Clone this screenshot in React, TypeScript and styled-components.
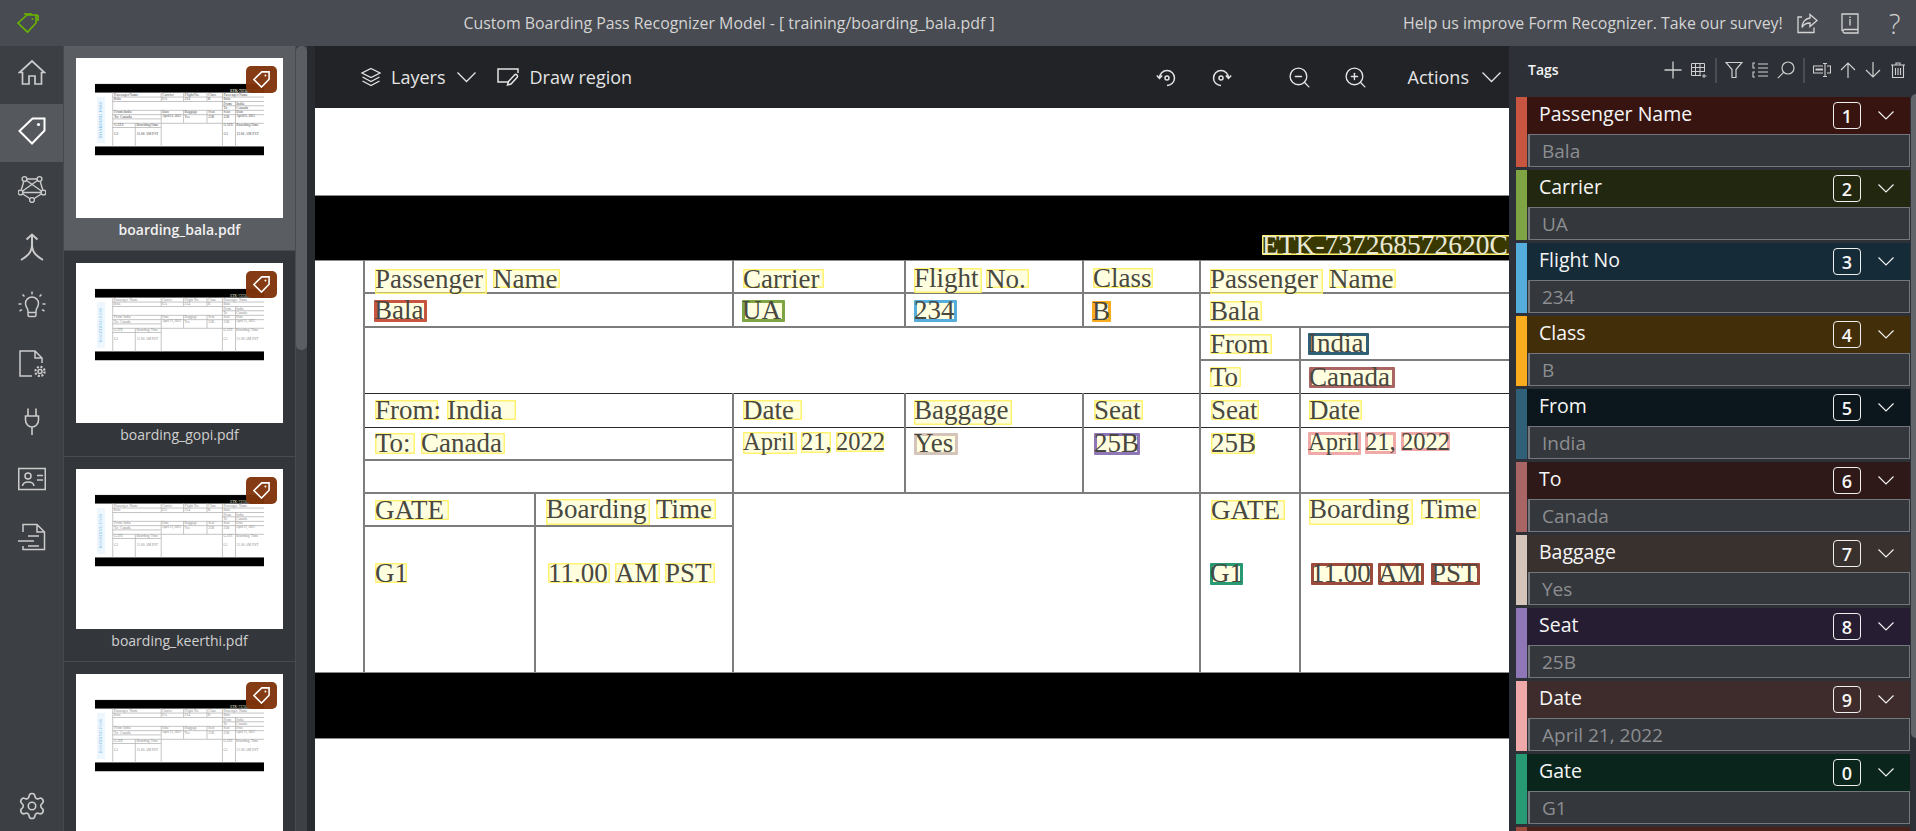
import { ReactNode } from "react"
import { Settings, ZoomIn, ZoomOut } from "lucide-react"
import { createGlobalStyle, styled } from "styled-components"

const UI_FONT = `"Open Sans", "Noto Sans", "Liberation Sans", sans-serif`

const GlobalStyle = createGlobalStyle`
  html, body, #root {
    margin: 0;
    height: 100%;
    overflow: hidden;
  }
  body {
    font-family: ${UI_FONT};
    background: #2d3036;
  }
  * {
    box-sizing: border-box;
  }
`

// ---- document data, all in window coordinates of the main view

const PAGE_X = 85
const PAGE_Y = -3
const THUMB_SCALE = 0.131

type WordItem = {
  t: string
  x: number
  y: number
  w: number
  h: number
  c?: string
  s?: number
}

const YELLOW = "#fff270"

const words: WordItem[] = [
  { t: "ETK-737268572620C", x: 1262, y: 235, w: 258, h: 20, s: 27.5 },
  { t: "Passenger", x: 375, y: 269, w: 112, h: 25 },
  { t: "Name", x: 493, y: 269, w: 67, h: 19 },
  { t: "Carrier", x: 743, y: 269, w: 81, h: 19 },
  { t: "Flight", x: 914, y: 268, w: 68, h: 25 },
  { t: "No.", x: 986, y: 269, w: 43, h: 19 },
  { t: "Class", x: 1093, y: 268, w: 60, h: 20 },
  { t: "Passenger", x: 1210, y: 269, w: 113, h: 25 },
  { t: "Name", x: 1329, y: 269, w: 67, h: 19 },
  { t: "Bala", x: 374, y: 300, w: 53, h: 22, c: "#c8553f" },
  { t: "UA", x: 742, y: 300, w: 43, h: 22, c: "#7fa444" },
  { t: "234", x: 914, y: 300, w: 43, h: 22, c: "#55addb" },
  { t: "B", x: 1092, y: 301, w: 19, h: 21, c: "#f9ad1e" },
  { t: "Bala", x: 1210, y: 301, w: 52, h: 20 },
  { t: "From", x: 1210, y: 334, w: 62, h: 20 },
  { t: "India", x: 1308, y: 333, w: 61, h: 22, c: "#2f6078" },
  { t: "To", x: 1210, y: 367, w: 31, h: 20 },
  { t: "Canada", x: 1309, y: 367, w: 86, h: 21, c: "#a96464" },
  { t: "From:", x: 375, y: 400, w: 63, h: 20 },
  { t: "India", x: 447, y: 400, w: 69, h: 20 },
  { t: "Date", x: 743, y: 400, w: 59, h: 20 },
  { t: "Baggage", x: 914, y: 400, w: 98, h: 25 },
  { t: "Seat", x: 1094, y: 400, w: 49, h: 20 },
  { t: "Seat", x: 1211, y: 400, w: 48, h: 20 },
  { t: "Date", x: 1309, y: 400, w: 53, h: 20 },
  { t: "To:", x: 375, y: 433, w: 40, h: 21 },
  { t: "Canada", x: 421, y: 433, w: 84, h: 21 },
  { t: "April", x: 743, y: 432, w: 54, h: 22, s: 24.5 },
  { t: "21,", x: 801, y: 432, w: 30, h: 21, s: 24.5 },
  { t: "2022", x: 836, y: 432, w: 48, h: 20, s: 24.5 },
  { t: "Yes", x: 914, y: 433, w: 44, h: 22, c: "#d5c4b9" },
  { t: "25B", x: 1094, y: 433, w: 46, h: 22, c: "#8f76b6" },
  { t: "25B", x: 1211, y: 433, w: 44, h: 21 },
  { t: "April", x: 1308, y: 432, w: 53, h: 23, c: "#efa9a9", s: 24.5 },
  { t: "21,", x: 1365, y: 432, w: 31, h: 22, c: "#efa9a9", s: 24.5 },
  { t: "2022", x: 1401, y: 432, w: 49, h: 19, c: "#efa9a9", s: 24.5 },
  { t: "GATE", x: 375, y: 500, w: 74, h: 20 },
  { t: "Boarding", x: 546, y: 499, w: 104, h: 26 },
  { t: "Time", x: 656, y: 499, w: 60, h: 20 },
  { t: "GATE", x: 1211, y: 500, w: 74, h: 20 },
  { t: "Boarding", x: 1309, y: 499, w: 104, h: 26 },
  { t: "Time", x: 1421, y: 499, w: 59, h: 20 },
  { t: "G1", x: 375, y: 563, w: 32, h: 20 },
  { t: "11.00", x: 548, y: 563, w: 62, h: 20 },
  { t: "AM", x: 615, y: 563, w: 45, h: 20 },
  { t: "PST", x: 665, y: 563, w: 50, h: 20 },
  { t: "G1", x: 1210, y: 563, w: 33, h: 22, c: "#279a73" },
  { t: "11.00", x: 1311, y: 563, w: 62, h: 22, c: "#9c4a3b" },
  { t: "AM", x: 1378, y: 563, w: 46, h: 22, c: "#9c4a3b" },
  { t: "PST", x: 1431, y: 563, w: 49, h: 22, c: "#9c4a3b" },
]

const hLines: [number, number, number, boolean?][] = [
  [292, 363, 1520],
  [326, 363, 1520],
  [359, 1199, 1520],
  [393, 363, 1520, true],
  [427, 363, 1520, true],
  [459, 363, 732],
  [492, 363, 1520],
  [525, 363, 732],
]

const vLines: [number, number, number][] = [
  [363, 260, 672],
  [534, 493, 672],
  [732, 260, 327],
  [732, 393, 672],
  [904, 260, 327],
  [904, 393, 493],
  [1082, 260, 327],
  [1082, 393, 493],
  [1199, 260, 672],
  [1299, 327, 672],
]

// the last row only peeks in at the bottom edge, its text is out of view
const tags = [
  { n: "Passenger Name", v: "Bala", k: "1", c: "#c8553f", bg: "#37140f" },
  { n: "Carrier", v: "UA", k: "2", c: "#7fa444", bg: "#22280f" },
  { n: "Flight No", v: "234", k: "3", c: "#55addb", bg: "#162b38" },
  { n: "Class", v: "B", k: "4", c: "#f9ad1e", bg: "#432e0a" },
  { n: "From", v: "India", k: "5", c: "#2f6078", bg: "#0b171c" },
  { n: "To", v: "Canada", k: "6", c: "#a96464", bg: "#2e1918" },
  { n: "Baggage", v: "Yes", k: "7", c: "#d5c4b9", bg: "#39312e" },
  { n: "Seat", v: "25B", k: "8", c: "#8f76b6", bg: "#261d33" },
  { n: "Date", v: "April 21, 2022", k: "9", c: "#efa9a9", bg: "#3e2b2b" },
  { n: "Gate", v: "G1", k: "0", c: "#279a73", bg: "#0a251c" },
  { n: "", v: "", k: "", c: "#9c4a3b", bg: "#48211a" },
]

const files = [
  "boarding_bala.pdf",
  "boarding_gopi.pdf",
  "boarding_keerthi.pdf",
  "",
]

// ---- shell

const Shell = styled.div`
  height: 100vh;
  display: grid;
  grid-template-rows: 46px 1fr;
  grid-template-columns: 63px 233px 19px 1fr 407px;
  grid-template-areas:
    "top top top top top"
    "nav thumbs rail canvas tags";
`

const TopBar = styled.header`
  grid-area: top;
  display: flex;
  align-items: center;
  justify-content: space-between;
  background: #484b51;
  color: #d4d4d4;
  font-size: 15.9px;
`

const Logo = styled.div`
  width: 55px;
  padding-left: 17px;
  color: #6bb700;
  display: flex;
`

const TopRight = styled.div`
  display: flex;
  align-items: center;
  width: 513px;
`

const SurveyText = styled.span`
  width: 384px;
  white-space: nowrap;
`

const TopIconSlot = styled.span`
  width: 42px;
  display: flex;
  justify-content: center;
`

const HelpMark = styled.span`
  font-size: 27px;
  font-weight: 300;
  line-height: 1;
  margin-left: 18px;
`

const Nav = styled.nav`
  grid-area: nav;
  background: #3c3f44;
  display: flex;
  flex-direction: column;
  color: #cbcbcb;
  overflow: hidden;
`

const NavItem = styled.div<{ $active?: boolean }>`
  height: 58px;
  flex: none;
  padding-bottom: 4px;
  display: flex;
  align-items: center;
  justify-content: center;
  background: ${(p) => (p.$active ? "#55585d" : "transparent")};
  color: ${(p) => (p.$active ? "#fff" : "inherit")};
`

const NavFooter = styled.div`
  margin-top: auto;
  height: 50px;
  display: flex;
  align-items: center;
  justify-content: center;
`

const ThumbList = styled.aside`
  grid-area: thumbs;
  background: #33363b;
  border-left: 1px solid #45484d;
  overflow: hidden;
`

const ThumbItem = styled.div<{ $selected?: boolean }>`
  height: 205.4px;
  padding-top: 12px;
  display: flex;
  flex-direction: column;
  align-items: center;
  background: ${(p) => (p.$selected ? "#5a5d62" : "#33363b")};
  border-bottom: 1px solid #484b50;
  border-right: 1px solid #484b50;
  color: ${(p) => (p.$selected ? "#f2f2f2" : "#d0d0d0")};
  font-weight: ${(p) => (p.$selected ? 600 : 400)};
`

const ThumbImage = styled.div`
  position: relative;
  width: 207px;
  height: 160px;
  flex: none;
  background: #fff;
  overflow: hidden;
`

const ThumbBadge = styled.div`
  position: absolute;
  top: 8px;
  right: 6px;
  width: 31px;
  height: 27px;
  border-radius: 5px;
  background: rgba(128, 52, 10, 0.96);
  color: #fff;
  display: flex;
  align-items: center;
  justify-content: center;
`

const ThumbLabel = styled.div`
  margin-top: 2px;
  font-size: 14px;
  line-height: 20px;
`

const Rail = styled.div`
  grid-area: rail;
  display: grid;
  grid-template-columns: 11px 8px;
  background: #282b30;
`

const RailTrack = styled.div`
  background: #3d4045;
`

const RailThumb = styled.div`
  height: 304px;
  border-radius: 5px;
  background: #5b5e63;
`

const CanvasArea = styled.main`
  grid-area: canvas;
  display: flex;
  flex-direction: column;
  min-width: 0;
  overflow: hidden;
`

const Toolbar = styled.div`
  height: 62px;
  flex: none;
  display: flex;
  align-items: center;
  justify-content: space-between;
  padding: 0 8px 0 46px;
  background: #212327;
  color: #e4e4e4;
  font-size: 18px;
`

const ToolGroup = styled.div`
  display: flex;
  align-items: center;
`

const ToolLabel = styled.span<{ $left?: number; $right?: number }>`
  margin-left: ${(p) => p.$left ?? 0}px;
  margin-right: ${(p) => p.$right ?? 0}px;
`

const ToolSlot = styled.span<{ $gap?: number }>`
  display: flex;
  margin-left: ${(p) => p.$gap ?? 0}px;
`

const PageViewport = styled.div`
  position: relative;
  flex: 1;
  background: #fff;
  overflow: hidden;
`

// the PDF page is a free canvas, words sit where the OCR found them
const Page = styled.div<{ $thumb?: boolean }>`
  position: absolute;
  width: 1580px;
  height: 1221px;
  background: #fff;
  left: ${(p) => (p.$thumb ? 0 : PAGE_X - 315)}px;
  top: ${(p) => (p.$thumb ? 0 : PAGE_Y - 108)}px;
  transform: ${(p) => (p.$thumb ? `scale(${THUMB_SCALE})` : "none")};
  transform-origin: 0 0;
  font-family: "Liberation Serif", "Times New Roman", serif;
  color: ${(p) => (p.$thumb ? "#8a8a8a" : "#484840")};
`

const Band = styled.div<{ $y: number; $h: number }>`
  position: absolute;
  left: ${230 - PAGE_X}px;
  width: 1290px;
  top: ${(p) => p.$y - PAGE_Y}px;
  height: ${(p) => p.$h}px;
  background: #000;
  border-top: 1px solid #8a8a8a;
  border-bottom: 1px solid #8a8a8a;
`

const HRule = styled.div<{ $y: number; $a: number; $b: number; $dark?: boolean; $thumb?: boolean }>`
  position: absolute;
  top: ${(p) => p.$y - PAGE_Y}px;
  left: ${(p) => p.$a - PAGE_X}px;
  width: ${(p) => p.$b - p.$a}px;
  height: ${(p) => (p.$thumb ? 6 : p.$dark ? 1 : 2)}px;
  background: ${(p) => (p.$thumb ? "#b4b4b4" : p.$dark ? "#2a2a2a" : "#7d7d7d")};
`

const VRule = styled.div<{ $x: number; $a: number; $b: number; $thumb?: boolean }>`
  position: absolute;
  left: ${(p) => p.$x - PAGE_X}px;
  top: ${(p) => p.$a - PAGE_Y}px;
  height: ${(p) => p.$b - p.$a}px;
  width: ${(p) => (p.$thumb ? 6 : 2)}px;
  background: ${(p) => (p.$thumb ? "#b4b4b4" : "#7d7d7d")};
`

const Stub = styled.div`
  position: absolute;
  left: ${245 - PAGE_X}px;
  top: ${295 - PAGE_Y}px;
  width: 61px;
  height: 351px;
  background: #eef7fd;
  color: #8fc6ea;
  writing-mode: vertical-rl;
  transform: rotate(180deg);
  font-size: 34px;
  line-height: 61px;
  text-align: center;
  white-space: nowrap;
`

const Word = styled.div<{
  $x: number
  $y: number
  $w: number
  $h: number
  $c?: string
  $s?: number
  $plain?: boolean
  $onBlack?: boolean
}>`
  position: absolute;
  left: ${(p) => p.$x - PAGE_X}px;
  top: ${(p) => p.$y - PAGE_Y}px;
  width: ${(p) => p.$w}px;
  height: ${(p) => p.$h}px;
  font-size: ${(p) => p.$s ?? 27}px;
  line-height: 18px;
  white-space: nowrap;
  border-radius: 1px;
  box-shadow: ${(p) =>
    p.$plain
      ? "none"
      : p.$c
        ? `inset 0 0 0 3px ${p.$c}`
        : `inset 0 0 0 1.5px ${YELLOW}`};
  background: ${(p) =>
    p.$plain
      ? "transparent"
      : p.$onBlack
        ? "rgba(255, 255, 0, 0.22)"
        : "rgba(255, 255, 0, 0.12)"};
  color: ${(p) => (p.$onBlack ? "#e9e9d6" : "inherit")};
  padding-top: 1px;
`

const TagsPanel = styled.section`
  grid-area: tags;
  position: relative;
  background: #2d3036;
  overflow: hidden;
  padding: 0 6px 0 7px;
`

const TagsHeader = styled.div`
  height: 51px;
  padding: 0 0 5px 12px;
  display: flex;
  align-items: center;
  justify-content: space-between;
  color: #cfcfcf;
`

const TagsTitle = styled.span`
  font-size: 14px;
  font-weight: 600;
  color: #f4f4f4;
`

const TagTools = styled.div`
  display: flex;
  align-items: center;
  padding-top: 2px;
`

const ToolIcon = styled.span<{ $w: number }>`
  width: ${(p) => p.$w}px;
  display: flex;
  justify-content: center;
`

const ToolDivider = styled.span`
  width: 2px;
  height: 25px;
  margin: 0 4px;
  background: #4a4d52;
`

const TagList = styled.div`
  display: flex;
  flex-direction: column;
  gap: 3px;
`

const TagRow = styled.div<{ $c: string }>`
  height: 70px;
  flex: none;
  border-left: 11px solid ${(p) => p.$c};
  display: flex;
  flex-direction: column;
`

const TagHead = styled.div<{ $bg: string }>`
  height: 37px;
  flex: none;
  display: flex;
  align-items: center;
  padding: 0 16px 4px 12px;
  background: ${(p) => p.$bg};
  color: #f6f6f6;
  font-size: 19.5px;
`

const TagName = styled.span`
  flex: 1;
`

const HotKey = styled.span`
  width: 28px;
  height: 27px;
  margin: 4px 17px 0 0;
  border: 1px solid #efefef;
  border-radius: 4px;
  display: flex;
  align-items: center;
  justify-content: center;
  font-size: 18px;
  font-weight: 600;
`

const ChevronSlot = styled.span`
  display: flex;
  margin-top: 4px;
`

const TagValue = styled.div`
  flex: 1;
  display: flex;
  align-items: center;
  padding-left: 12px;
  background: #34373c;
  border: 1px solid #74777b;
  border-left-width: 2px;
  margin-left: 1px;
  color: #8c8e91;
  font-size: 19px;
`

const PanelScroll = styled.div`
  position: absolute;
  top: 48px;
  right: 0;
  width: 5px;
  height: 644px;
  border-radius: 5px 0 0 5px;
  background: #62656a;
`

// ---- icons

const Svg = ({
  w,
  h = w,
  box,
  sw = 1.5,
  flip,
  children,
}: {
  w: number
  h?: number
  box: string
  sw?: number
  flip?: boolean
  children: ReactNode
}) => (
  <svg
    width={w}
    height={h}
    viewBox={box}
    fill="none"
    stroke="currentColor"
    strokeWidth={sw}
    style={flip ? { transform: "scaleX(-1)" } : undefined}
  >
    {children}
  </svg>
)

const TagGlyph = ({ size, sw = 2 }: { size: number; sw?: number }) => (
  <Svg w={size} box="0 0 28 28" sw={sw}>
    <path d="M1.5 14 L14.5 1.5 H26.5 V13.5 L14 26.5 Z" />
    <circle cx="20.5" cy="7.5" r="1.6" fill="currentColor" stroke="none" />
  </Svg>
)

const ToolChevron = () => (
  <Svg w={19} h={11} box="0 0 19 11" sw={1.3}>
    <path d="M0.5 0.5 L9.5 9.5 L18.5 0.5" />
  </Svg>
)

const navIcons = [
  <Svg w={28} box="0 0 28 28" sw={1.7}>
    <path d="M1.5 13.5 L14 2 L26.5 13.5 H23.5 V25 H17 V17 H11 V25 H4.5 V13.5 Z" />
  </Svg>,
  <TagGlyph size={28} />,
  <Svg w={28} box="0 0 28 28" sw={1.4}>
    <path d="M6.5 4 L21.5 4 L25.5 17.5 L14 25 L2.5 17.5 Z M6.5 4 L25.5 17.5 M21.5 4 L2.5 17.5 M2.5 17.5 H25.5" />
    {[
      [6.5, 4],
      [21.5, 4],
      [25.5, 17.5],
      [14, 25],
      [2.5, 17.5],
    ].map(([cx, cy]) => (
      <circle key={cx} cx={cx} cy={cy} r="2.4" fill="#3c3f44" />
    ))}
  </Svg>,
  <Svg w={28} box="0 0 28 28" sw={2}>
    <path d="M8.5 6.5 L14 1.5 L19.5 6.5 M14 1.5 V12 C14 20 8 24 3 27 M14 12 C14 20 20 24 25 27" />
  </Svg>,
  <Svg w={28} box="0 0 28 28" sw={1.5}>
    <path d="M10 20 C10 17 7.5 16 7.5 12.5 A6.5 6.5 0 0 1 20.5 12.5 C20.5 16 18 17 18 20 V24 A1.5 1.5 0 0 1 16.5 25.5 H11.5 A1.5 1.5 0 0 1 10 24 Z M10 21.5 H18" />
    <path d="M14 0.5 V3.5 M4.5 3.5 L6.5 5.5 M23.5 3.5 L21.5 5.5 M0.5 13 H3.5 M24.5 13 H27.5 M1.5 20 L4 18.7 M26.5 20 L24 18.7" />
  </Svg>,
  <Svg w={28} box="0 0 28 28" sw={1.5}>
    <path d="M14 27 H2 V2 H17 L24 9 V14 M17 2 V9 H24" />
    <circle cx="22" cy="22.5" r="2" />
    <circle cx="22" cy="22.5" r="4.6" strokeWidth="2.2" strokeDasharray="2 1.6" />
  </Svg>,
  <Svg w={28} box="0 0 28 28" sw={1.6}>
    <path d="M10 1.5 V9 M18 1.5 V9 M7.5 9 H20.5 V13 C20.5 17 17.5 20 14 20 C10.5 20 7.5 17 7.5 13 Z M14 20 V28" />
  </Svg>,
  <Svg w={28} box="0 0 28 28" sw={1.5}>
    <rect x="0.75" y="3.5" width="26.5" height="21" />
    <circle cx="10" cy="11" r="3" />
    <path d="M4.5 21 C5 15.5 15.5 15.5 16 21 M19 10.5 H25 M19 15 H25" />
  </Svg>,
  <Svg w={28} box="0 0 28 28" sw={1.5}>
    <path d="M5 9 V1.5 H19 L26.5 9 V26.5 H5 V23 M19 1.5 V9 H26.5" />
    <path d="M10 13 H21 M0 18 H16 M10 23 H21" />
  </Svg>,
]

const RotateIcon = ({ flip }: { flip?: boolean }) => (
  <Svg w={21} box="0 0 21 21" flip={flip}>
    <path d="M3.5 11 A7.5 7.5 0 1 1 11 18.5" />
    <path d="M0.8 8.5 L3.5 11.3 L6.2 8.5" />
    <circle cx="11" cy="11" r="2" />
  </Svg>
)

const PageContent = ({ thumb }: { thumb?: boolean }) => (
  <Page $thumb={thumb}>
    {thumb && <Stub>BOARDING PASS</Stub>}
    <Band $y={195} $h={66} />
    <Band $y={672} $h={67} />
    {hLines.map(([y, a, b, dark]) => (
      <HRule key={`${y}-${a}`} $y={y} $a={a} $b={b} $dark={dark} $thumb={thumb} />
    ))}
    {vLines.map(([x, a, b]) => (
      <VRule key={`${x}-${a}`} $x={x} $a={a} $b={b} $thumb={thumb} />
    ))}
    {words.map((w) => (
      <Word
        key={`${w.t}-${w.x}`}
        $x={w.x}
        $y={w.y}
        $w={w.w}
        $h={w.h}
        $c={w.c}
        $s={w.s}
        $plain={thumb}
        $onBlack={w.y < 260}
      >
        {w.t}
      </Word>
    ))}
  </Page>
)

export default function App() {
  return (
    <>
      <GlobalStyle />
      <Shell>
        <TopBar>
          <Logo>
            <Svg w={22} box="0 0 22 22" sw={1.6}>
              <path d="M1 11 L10 3 H19 V11 L10.5 20 Z" />
              <path d="M7 2 H15 M19 3 L21 3.5 V9" />
              <circle cx="15.5" cy="7" r="1" fill="currentColor" stroke="none" />
            </Svg>
          </Logo>
          <span>Custom Boarding Pass Recognizer Model - [ training/boarding_bala.pdf ]</span>
          <TopRight>
            <SurveyText>Help us improve Form Recognizer. Take our survey!</SurveyText>
            <TopIconSlot>
              <Svg w={21} box="0 0 21 20" sw={1.3}>
                <path d="M5 3.5 H1 V19 H17 V14" />
                <path d="M13 1 L20 7 L13 13 V9.5 C9 9.5 6.5 11 5 14 C5 9 8 5 13 4.5 Z" />
              </Svg>
            </TopIconSlot>
            <TopIconSlot>
              <Svg w={18} h={21} box="0 0 18 21" sw={1.3}>
                <path d="M1 18 V1 H17 V20 H3 A2 2 0 0 1 3 16.5 H17" />
                <path d="M9 6 V12.5 M9 3.6 V5" />
              </Svg>
            </TopIconSlot>
            <HelpMark>?</HelpMark>
          </TopRight>
        </TopBar>

        <Nav>
          {navIcons.map((icon, idx) => (
            <NavItem key={idx} $active={idx === 1}>
              {icon}
            </NavItem>
          ))}
          <NavFooter>
            <Settings size={30} strokeWidth={1.3} />
          </NavFooter>
        </Nav>

        <ThumbList>
          {files.map((file, idx) => (
            <ThumbItem key={idx} $selected={idx === 0}>
              <ThumbImage>
                <PageContent thumb />
                <ThumbBadge>
                  <TagGlyph size={17} sw={2.6} />
                </ThumbBadge>
              </ThumbImage>
              {file && <ThumbLabel>{file}</ThumbLabel>}
            </ThumbItem>
          ))}
        </ThumbList>

        <Rail>
          <RailTrack>
            <RailThumb />
          </RailTrack>
        </Rail>

        <CanvasArea>
          <Toolbar>
            <ToolGroup>
              <Svg w={20} box="0 0 20 20" sw={1.3}>
                <path d="M10 1.5 L19 6 L10 10.5 L1 6 Z M1.5 10 L10 14.5 L18.5 10 M1.5 14 L10 18.5 L18.5 14" />
              </Svg>
              <ToolLabel $left={10} $right={12}>
                Layers
              </ToolLabel>
              <ToolChevron />
              <ToolSlot $gap={21}>
                <Svg w={22} h={18} box="0 0 22 18">
                  <path d="M12 14 H1 V1 H21 V5" />
                  <path d="M10.5 17 L11.5 13.5 L17.5 7 A1.6 1.6 0 0 1 20 9.5 L14 16 Z" />
                </Svg>
              </ToolSlot>
              <ToolLabel $left={10}>Draw region</ToolLabel>
            </ToolGroup>
            <ToolGroup>
              <RotateIcon />
              <ToolSlot $gap={34}>
                <RotateIcon flip />
              </ToolSlot>
              <ToolSlot $gap={55}>
                <ZoomOut size={25} strokeWidth={1.3} />
              </ToolSlot>
              <ToolSlot $gap={31}>
                <ZoomIn size={25} strokeWidth={1.3} />
              </ToolSlot>
              <ToolLabel $left={40} $right={13}>
                Actions
              </ToolLabel>
              <ToolChevron />
            </ToolGroup>
          </Toolbar>
          <PageViewport>
            <PageContent />
          </PageViewport>
        </CanvasArea>

        <TagsPanel>
          <TagsHeader>
            <TagsTitle>Tags</TagsTitle>
            <TagTools>
              <ToolIcon $w={26}>
                <Svg w={18} box="0 0 18 18" sw={1.3}>
                  <path d="M9 0.5 V17.5 M0.5 9 H17.5" />
                </Svg>
              </ToolIcon>
              <ToolIcon $w={25}>
                <Svg w={16} box="0 0 16 16" sw={1}>
                  <path d="M13.5 10 V1.5 H0.5 V13.5 H10 M0.5 5.5 H13.5 M0.5 9.5 H13.5 M4.5 1.5 V13.5 M9 1.5 V13.5 M13 12 V16 M11 14 H15.5" />
                </Svg>
              </ToolIcon>
              <ToolDivider />
              <ToolIcon $w={26}>
                <Svg w={18} box="0 0 18 18" sw={1.2}>
                  <path d="M1 1.5 H17 L11 8.5 V16.5 L7 16.5 V8.5 Z" />
                </Svg>
              </ToolIcon>
              <ToolIcon $w={26}>
                <Svg w={16} box="0 0 16 16" sw={1.1}>
                  <path d="M6 2 H16 M6 6 H16 M6 10 H16 M6 14 H16 M3 1 H1 V6 H3 M3 10 H1 V15 H3" />
                </Svg>
              </ToolIcon>
              <ToolIcon $w={26}>
                <Svg w={18} box="0 0 18 18" sw={1.2}>
                  <circle cx="11" cy="7" r="6" />
                  <path d="M6.8 11.2 L0.8 17.2" />
                </Svg>
              </ToolIcon>
              <ToolDivider />
              <ToolIcon $w={26}>
                <Svg w={18} h={14} box="0 0 18 14" sw={1.1}>
                  <path d="M10 3 H0.5 V10 H10 M14 3 H17.5 V10 H14 M10 0.5 H14 M10 13.5 H14 M12 0.5 V13.5" />
                  <path d="M2.5 6.5 H10" strokeWidth="2" />
                </Svg>
              </ToolIcon>
              <ToolIcon $w={25}>
                <Svg w={16} box="0 0 16 16" sw={1.2}>
                  <path d="M8 16 V1 M1 8 L8 1 L15 8" />
                </Svg>
              </ToolIcon>
              <ToolIcon $w={25}>
                <Svg w={16} box="0 0 16 16" sw={1.2}>
                  <path d="M8 0 V15 M1 8 L8 15 L15 8" />
                </Svg>
              </ToolIcon>
              <ToolIcon $w={25}>
                <Svg w={14} h={16} box="0 0 14 16" sw={1.1}>
                  <path d="M0 3 H14 M5 3 V1 H9 V3 M1.5 3 V15.5 H12.5 V3" />
                  <path d="M4.5 6 V13 M7 6 V13 M9.5 6 V13" />
                </Svg>
              </ToolIcon>
            </TagTools>
          </TagsHeader>
          <TagList>
            {tags.map((tag) => (
              <TagRow key={tag.c} $c={tag.c}>
                <TagHead $bg={tag.bg}>
                  <TagName>{tag.n}</TagName>
                  {tag.k && <HotKey>{tag.k}</HotKey>}
                  <ChevronSlot>
                    <Svg w={16} h={9} box="0 0 16 9" sw={1.1}>
                      <path d="M0.5 0.5 L8 8 L15.5 0.5" />
                    </Svg>
                  </ChevronSlot>
                </TagHead>
                <TagValue>{tag.v}</TagValue>
              </TagRow>
            ))}
          </TagList>
          <PanelScroll />
        </TagsPanel>
      </Shell>
    </>
  )
}
